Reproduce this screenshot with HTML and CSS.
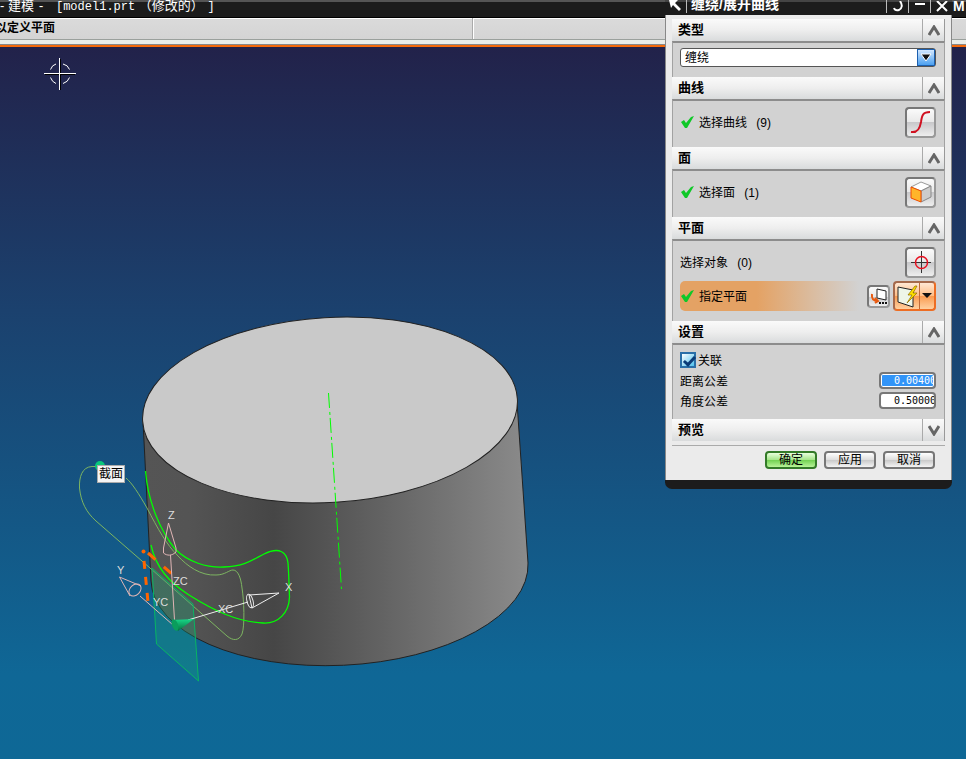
FILE: index.html
```
<!DOCTYPE html>
<html lang="zh-CN">
<head>
    <meta charset="UTF-8">
    <meta name="viewport" content="width=device-width, initial-scale=1.0">
    <title>建模 - [model1.prt]</title>
    <link rel="stylesheet" href="styles.css">
</head>
<body>
    <header class="titlebar">
        <span class="app-title">- 建模 <span class="mono">- </span><span class="mono file">[model1.prt</span> （修改的） <span class="mono">]</span></span>
        <span class="menu-letter">M</span>
    </header>
    <div class="prompt-bar">
        <div class="prompt">以定义平面</div>
        <div class="status"></div>
    </div>

    <main class="viewport">
        <svg class="scene" aria-label="model view">
            <defs>
                <linearGradient id="side" gradientUnits="userSpaceOnUse" x1="142" y1="0" x2="528" y2="0">
                    <stop offset="0" stop-color="#555"/>
                    <stop offset="0.12" stop-color="#545454"/>
                    <stop offset="0.34" stop-color="#464646"/>
                    <stop offset="0.5" stop-color="#565656"/>
                    <stop offset="0.75" stop-color="#707070"/>
                    <stop offset="1" stop-color="#8b8b8b"/>
                </linearGradient>
                <linearGradient id="cone" x1="0" y1="0" x2="0" y2="1">
                    <stop offset="0" stop-color="#19d888"/>
                    <stop offset="1" stop-color="#04713f"/>
                </linearGradient>
            </defs>
            <g transform="translate(0 -47)">
                <!-- cursor -->
                <g fill="none" shape-rendering="crispEdges">
                    <path d="M45 74.500H75M60.500 59V90" stroke="#000"/>
                    <path d="M44 73.500H76M59.500 58V90" stroke="#fff"/>
                </g>
                <path d="M50.500 69.500Q52 65 56 64M63 64Q68 65 69.500 69.500M69.500 77.500Q68 82 63 83.500M56 83.500Q52 82 50.500 77.500" fill="none" stroke="#fff"/>

                <!-- cylinder -->
                <path d="M143 421L151 581A188 93 -2.800 0 0 528 563L517 402Z" fill="url(#side)" stroke="#222"/>
                <ellipse cx="330" cy="410" rx="187.700" ry="92.500" transform="rotate(-3.400 330 410)" fill="#c9c9c9" stroke="#222"/>
                <path d="M328.500 393L341.500 589" stroke="#0f0" stroke-dasharray="15 4 3 3" fill="none"/>

                <!-- flat section curve -->
                <path d="M100 466.500H92C82 467 79 477 79.500 488C81 502 86 512 96 521L150 568L227 636C233 641 239 641 242 634C245 626 244 600 242 588C241 578 238 570 233 570C229 570 225 575 216 575C201 576 187 566 178 556C166 544 158 529 147 508C139 494 132 483 126 478" fill="none" stroke="#7db561"/>
                <!-- wrapped curve -->
                <path d="M145.500 471C148 502 160 530 175 549C188 562 207 568 224 567C246 566 254 559 264 554C280 546 287 553 288 563C289 576 289 587 289.500 597C289 613 278 624 263 623C237 622 213 610 189 595C169 582 156 568 151 545" fill="none" stroke="#0f0" stroke-width="1.300"/>

                <!-- datum plane -->
                <path d="M152 568L193 604L198.500 681L156.500 644Z" fill="#18a878" fill-opacity="0.3" stroke="#08b563"/>
                <g fill="none" stroke="#ff6500" stroke-width="3" stroke-dasharray="8 8">
                    <path d="M144 561L148 602"/>
                    <path d="M148 553L172 574" stroke-dasharray="10 11"/>
                </g>
                <circle cx="143.500" cy="551.500" r="2" fill="#ff6500"/>

                <!-- coordinate axes -->
                <g fill="none" stroke="#e0b5b5">
                    <path d="M174.500 620L170.500 555M168.500 523L163.500 548V553C167 556 172 556 176 552V548L168.500 523"/>
                    <path d="M173 625L140 596M119.500 577L130 596M119.500 577L141 586"/>
                    <ellipse cx="135" cy="590" rx="7" ry="5" transform="rotate(-45 135 590)"/>
                </g>
                <g fill="none" stroke="#eee">
                    <path d="M188 620L248 602M279 593L249 595L252 608Z"/>
                    <ellipse cx="250" cy="601" rx="3" ry="7" transform="rotate(-15 250 601)"/>
                </g>
                <path d="M172 620L194 619L178 631Z" fill="url(#cone)"/>
                <ellipse cx="175" cy="625" rx="3" ry="6" transform="rotate(-20 175 625)" fill="#0a9d5c"/>
                <circle cx="100" cy="466" r="5" fill="#08c77b"/>
                <g class="axis-names">
                    <text x="168" y="519">Z</text>
                    <text x="173" y="585">ZC</text>
                    <text x="117" y="574">Y</text>
                    <text x="153" y="606">YC</text>
                    <text x="218" y="613">XC</text>
                    <text x="285" y="591">X</text>
                </g>
            </g>
        </svg>
        <span class="section-tag">截面</span>
    </main>

    <form class="dialog">
        <div class="dialog-title">
            <span class="title-cell"><svg width="14" height="12"><path d="M1 0H10L7 3L13 9L11 11L5 5L3 8Z" fill="#fff"/></svg></span>
            <h1>缠绕/展开曲线</h1>
            <button type="button" class="title-btn" aria-label="重置"><svg width="14" height="12"><path d="M3 7Q4 10 8 9Q13 6 9 0" fill="none" stroke="#fff" stroke-width="2"/></svg></button>
            <button type="button" class="title-btn" aria-label="最小化"><svg width="14" height="12"><path d="M2 3H12" stroke="#fff" stroke-width="2"/></svg></button>
            <button type="button" class="title-btn" aria-label="关闭"><svg width="14" height="12"><path d="M2 0L12 10M12 0L2 10" stroke="#fff" stroke-width="2"/></svg></button>
        </div>

        <div class="dialog-body">
            <section>
                <h2>类型<button type="button" class="fold" aria-label="折叠"><svg width="12" height="11"><path d="M1 10L6 2L11 10"/></svg></button></h2>
                <div class="group type-group">
                    <div class="select-box">
                        <select aria-label="类型"><option>缠绕</option></select>
                        <span class="drop"><svg width="16" height="16"><path d="M3 4H13L8 11Z" fill="#111" stroke="#fff"/></svg></span>
                    </div>
                </div>
            </section>

            <section>
                <h2>曲线<button type="button" class="fold" aria-label="折叠"><svg width="12" height="11"><path d="M1 10L6 2L11 10"/></svg></button></h2>
                <div class="group">
                    <div class="row">
                        <svg class="check" width="14" height="12"><path d="M0 6L3 4L5 7L10 1L13 0L6 12L4 12Z"/></svg>
                        <span class="row-label">选择曲线 <span class="count">(9)</span></span>
                        <button type="button" class="tool" aria-label="曲线"><svg width="24" height="24"><path d="M2 22C9 23 11 18 12 12C13 5 14 2 21 2" fill="none" stroke="#d01020" stroke-width="2"/></svg></button>
                    </div>
                </div>
            </section>

            <section>
                <h2>面<button type="button" class="fold" aria-label="折叠"><svg width="12" height="11"><path d="M1 10L6 2L11 10"/></svg></button></h2>
                <div class="group">
                    <div class="row">
                        <svg class="check" width="14" height="12"><path d="M0 6L3 4L5 7L10 1L13 0L6 12L4 12Z"/></svg>
                        <span class="row-label">选择面 <span class="count">(1)</span></span>
                        <button type="button" class="tool" aria-label="面"><svg width="24" height="24">
                            <path d="M2 7L12 2L22 6L12 11Z" fill="#fff" stroke="#999"/>
                            <path d="M22 6V17L12 22V11Z" fill="#ccc" stroke="#888"/>
                            <path d="M2 7L12 11V22L2 18Z" fill="#ffb52a" stroke="#f04a00"/>
                        </svg></button>
                    </div>
                </div>
            </section>

            <section>
                <h2>平面<button type="button" class="fold" aria-label="折叠"><svg width="12" height="11"><path d="M1 10L6 2L11 10"/></svg></button></h2>
                <div class="group plane-group">
                    <div class="row">
                        <span class="row-label">选择对象 <span class="count">(0)</span></span>
                        <button type="button" class="tool" aria-label="对象"><svg width="24" height="24"><path d="M2 12.500H22M12.500 1V23" stroke="#333"/><circle cx="12.500" cy="12.500" r="6" fill="none" stroke="#e81020" stroke-width="1.500"/></svg></button>
                    </div>
                    <div class="row active">
                        <svg class="check" width="14" height="12"><path d="M0 6L3 4L5 7L10 1L13 0L6 12L4 12Z"/></svg>
                        <span class="row-label">指定平面</span>
                        <button type="button" class="tool small" aria-label="平面对话框"><svg width="18" height="18"><path d="M7 2L16 4V13L7 11Z" fill="#fff" stroke="#222"/><path d="M2 7Q1 14 8 14M5 11L8 14L5 16" fill="none" stroke="#e85a10" stroke-width="2"/><path d="M9 16H17" stroke="#111" stroke-width="2" stroke-dasharray="2 1"/></svg></button>
                        <div class="split">
                            <button type="button" class="split-main" aria-label="自动判断"><svg width="22" height="24"><path d="M2 3L17 6V23L2 18Z" fill="#eef6e8" stroke="#222"/><path d="M19 2L12 11H16L11 19L21 9H17L21 2Z" fill="#ffe000" stroke="#8a6a00" stroke-width="0.700"/></svg></button>
                            <button type="button" class="split-drop" aria-label="更多"><svg width="10" height="6"><path d="M0 0H10L5 5Z" fill="#111"/></svg></button>
                        </div>
                    </div>
                </div>
            </section>

            <section>
                <h2>设置<button type="button" class="fold" aria-label="折叠"><svg width="12" height="11"><path d="M1 10L6 2L11 10"/></svg></button></h2>
                <div class="group settings">
                    <label class="setting"><input type="checkbox" checked>关联</label>
                    <div class="setting">
                        <label for="distance">距离公差</label>
                        <input type="text" id="distance" class="selected" value="0.004000">
                    </div>
                    <div class="setting">
                        <label for="angle">角度公差</label>
                        <input type="text" id="angle" value="0.500000">
                    </div>
                </div>
            </section>

            <section>
                <h2>预览<button type="button" class="fold" aria-label="展开"><svg width="12" height="11"><path d="M1 1L6 9L11 1"/></svg></button></h2>
            </section>

            <div class="actions">
                <button type="submit" class="ok">确定</button>
                <button type="button">应用</button>
                <button type="button">取消</button>
            </div>
        </div>
    </form>
</body>
</html>
```
FILE: styles.css
```
* {
    box-sizing: border-box;
}
body {
    margin: 0;
    min-height: 100vh;
    display: flex;
    flex-direction: column;
    position: relative;
    overflow: hidden;
    font-family: "Liberation Sans", "Noto Sans CJK SC", sans-serif;
    font-size: 12px;
    color: #000;
}
button, input, select {
    font: inherit;
    color: inherit;
    margin: 0;
    padding: 0;
}
svg {
    display: block;
}

/* application bars */
.titlebar {
    height: 18px;
    display: flex;
    justify-content: space-between;
    background: linear-gradient(#555 2px, #1c1c1c 2px);
    border-bottom: 1px solid #000;
    color: #fff;
    line-height: 12px;
}
.app-title {
    font-size: 13px;
    white-space: pre;
}
.mono {
    font-family: "Liberation Mono", monospace;
    font-size: 12px;
}
.file {
    margin-left: 4px;
}
.menu-letter {
    width: 13px;
    font-size: 14px;
    font-weight: bold;
}
.prompt-bar {
    display: flex;
    height: 29px;
    background: linear-gradient(#fff 1px, #dadada 1px, #d4d4d4 21px, #9aa09c 21px, #9aa09c 22px, #eaeeea 22px, #eaeeea 26px, #888 26px, #888 27px, #f56a0a 27px);
}
.prompt {
    width: 478px;
    height: 21px;
    margin-left: -5px;
    border-right: 1px solid #aaa;
    font-weight: bold;
    line-height: 21px;
}
.status {
    flex: 1;
    height: 21px;
    border-left: 1px solid #fff;
}

/* graphics window */
.viewport {
    flex: 1;
    display: flex;
    position: relative;
    background: linear-gradient(#22224a, #1b416e 37%, #0f6796 88%, #0e6896);
}
.scene {
    flex: 1;
}
.axis-names {
    fill: #ddd;
    font-family: "Liberation Sans", sans-serif;
    font-size: 11px;
}
.section-tag {
    position: absolute;
    left: 97px;
    top: 418px;
    padding: 1px 1px 0;
    border: 1px solid #aaa;
    background: #f4f4f4;
    line-height: 15px;
}

/* dialog */
.dialog {
    position: absolute;
    top: 0;
    right: 14px;
    width: 287px;
    border-bottom: 9px solid #1c1c1c;
    border-radius: 0 0 7px 7px;
    background: #1c1c1c;
}
.dialog-title {
    display: flex;
    height: 15px;
    color: #fff;
    background: linear-gradient(#444 2px, #1c1c1c 2px);
}
.title-cell {
    width: 22px;
    border-right: 1px solid #bbb;
    height: 13px;
    padding-left: 3px;
}
.dialog-title h1 {
    flex: 1;
    margin: 0;
    padding-left: 4px;
    font-size: 14px;
    line-height: 8px;
}
.title-btn {
    width: 22px;
    height: 13px;
    padding-left: 4px;
    border: 0;
    border-left: 1px solid #bbb;
    background: none;
}
.dialog-body {
    padding: 4px 6px 11px 6px;
    border: 1px solid #888;
    border-top: 0;
    border-bottom: 0;
    background: #ebebeb;
}
.dialog h2 {
    display: flex;
    align-items: center;
    justify-content: space-between;
    height: 22px;
    margin: 0;
    padding-left: 6px;
    border-right: 1px solid #999;
    background: linear-gradient(#fafafa, #eee 50%, #d9dbdc);
    font-size: 13px;
    line-height: 20px;
}
.fold {
    width: 22px;
    height: 22px;
    padding-left: 5px;
    border: 0;
    border-left: 1px solid #aaa;
    background: none;
}
.fold path {
    fill: none;
    stroke: #666;
    stroke-width: 3;
}
.group {
    height: 48px;
    padding: 6px 8px 0 7px;
    border: 1px solid #a2a2a2;
    border-top: 2px solid #8c8c8c;
    border-bottom: 0;
    background: #d2d2d2;
}
.type-group {
    height: 36px;
    padding: 5px 8px 0 7px;
}
.select-box {
    position: relative;
    display: flex;
    height: 19px;
    border: 1px solid #555;
    border-radius: 3px;
    background: #fff;
}
.select-box select {
    flex: 1;
    appearance: none;
    padding-left: 4px;
    border: 0;
    background: none;
}
.drop {
    position: absolute;
    top: 0;
    right: 0;
    width: 18px;
    height: 17px;
    border: 1px solid #1c5fae;
    background: linear-gradient(#d4e8ff, #4ba0f0);
    pointer-events: none;
}
.row {
    display: flex;
    align-items: center;
    height: 30px;
}
.check {
    margin: 0 4px 0 1px;
    fill: #10c828;
}
.row-label {
    flex: 1;
    padding-bottom: 2px;
    white-space: pre;
}
.count {
    margin-left: 6px;
}
.tool {
    display: grid;
    place-items: center;
    width: 31px;
    height: 31px;
    border: 2px solid #777;
    border-right-color: #999;
    border-bottom-color: #999;
    border-radius: 4px;
    background: linear-gradient(#fafafa, #e8e8e8 50%, #c8c8ca 50%, #eee);
}
.small {
    width: 23px;
    height: 23px;
    margin-right: 3px;
}
.plane-group {
    display: flex;
    flex-direction: column;
    gap: 4px;
    height: 82px;
}
.active {
    border-radius: 5px;
    background: linear-gradient(90deg, #e4a264 30%, #d2d2d2 70%);
}
.split {
    display: flex;
    width: 43px;
    height: 30px;
    border: 2px solid #8a6555;
    border-color: #a56a4c #ed6d23 #ed6d23 #a56a4c;
    border-radius: 4px;
    background: linear-gradient(#ffe8d4, #ffbd84 50%, #fa9b50 50%, #ffd0a0);
}
.split-main, .split-drop {
    display: grid;
    place-items: center;
    border: 0;
    background: none;
}
.split-main {
    width: 24px;
}
.split-drop {
    flex: 1;
    border-left: 1px solid #c06a38;
}
.settings {
    height: 76px;
    padding-top: 4px;
}
.setting {
    display: flex;
    align-items: center;
    justify-content: space-between;
    height: 20px;
}
label.setting {
    justify-content: flex-start;
    gap: 2px;
    height: 21px;
}
.setting input[type="checkbox"] {
    appearance: none;
    width: 16px;
    height: 16px;
    border: 2px solid #2a6fa8;
    background: linear-gradient(135deg, #fff, #4cc0ee);
    position: relative;
}
.setting input[type="checkbox"]:checked::after {
    content: "";
    position: absolute;
    left: 4px;
    top: 0;
    width: 4px;
    height: 9px;
    border: solid #0c3c78;
    border-width: 0 3px 3px 0;
    transform: rotate(42deg);
}
.setting input[type="text"] {
    width: 57px;
    height: 17px;
    padding: 0 0 0 1px;
    border: 2px solid #777;
    border-radius: 4px;
    background: #fff;
    font-family: "DejaVu Sans Mono", monospace;
    font-size: 10px;
    text-indent: 12px;
}
.setting input.selected {
    background: #3194f8;
    box-shadow: inset 0 0 0 1px #fff;
    color: #fff;
}
.actions {
    display: flex;
    justify-content: flex-end;
    gap: 7px;
    margin-top: 4px;
    padding: 5px 10px 0 0;
    border-top: 1px solid #aaa;
}
.actions button {
    width: 52px;
    height: 18px;
    border: 2px solid #777;
    border-radius: 4px;
    background: linear-gradient(#fff, #ddd 50%, #c8c8c8 50%, #f4f4f4);
    line-height: 14px;
}
.actions .ok {
    border-color: #337a28;
    background: linear-gradient(#e8ffdc, #a4e488 50%, #70d050 50%, #b8f498);
}
```
